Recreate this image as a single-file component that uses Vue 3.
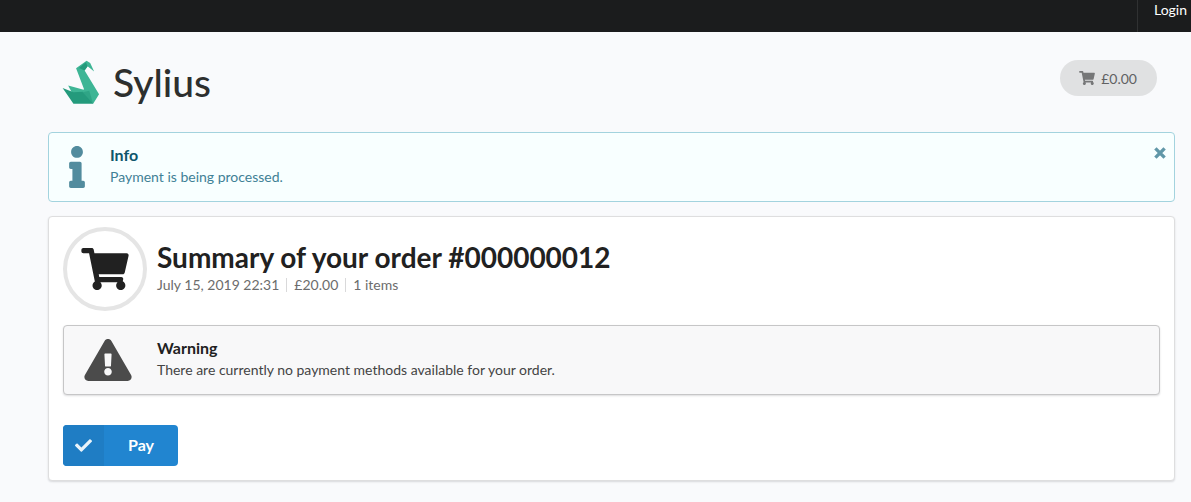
<script setup>
import { ref } from "vue";

const showInfo = ref(true);

const order = {
  number: "000000012",
  details: ["July 15, 2019 22:31", "£20.00", "1 items"],
};

const cartPath =
  "M528.12 301.319l47.273-208C578.806 78.301 567.391 64 551.99 64H159.208l-9.166-44.81C147.758 8.021 137.93 0 126.529 0H24C10.745 0 0 10.745 0 24v16c0 13.255 10.745 24 24 24h69.883l70.248 343.435C147.325 417.1 136 435.222 136 456c0 30.928 25.072 56 56 56s56-25.072 56-56c0-15.674-6.447-29.835-16.824-40h209.647C430.447 426.165 424 440.326 424 456c0 30.928 25.072 56 56 56s56-25.072 56-56c0-22.172-12.888-41.332-31.579-50.405l5.517-24.276c3.413-15.018-8.002-29.319-23.403-29.319H218.117l-6.545-32h293.145c11.206 0 20.92-7.754 23.403-18.681z";
</script>

<template>
  <nav class="topbar">
    <a href="#" class="login">Login</a>
  </nav>

  <div class="container">
    <header class="header">
      <a href="#" class="logo">
        <svg class="swan" viewBox="66 28 114 134" aria-hidden="true">
          <path fill="#3eb595" d="M84 106L134 119L144 130L96 129Z" />
          <path fill="#249a7c" d="M67 113L100 126L146 124L160 161H100Z" />
          <path fill="#3eb595" d="M108 53L140 30L151 37L163 63L143 47L134 60L178 132L160 161L142 132L128 126L132 116Z" />
          <path fill="#2fa586" d="M128 126L148 122L160 161Z" />
          <path fill="#249a7c" d="M117 52L138 35L143 47L134 60Z" />
        </svg>
        <span class="brand">Sylius</span>
      </a>
      <button type="button" class="cart">
        <svg class="cart-icon" viewBox="0 0 576 512" aria-hidden="true">
          <path fill="currentColor" :d="cartPath" />
        </svg>
        £0.00
      </button>
    </header>

    <div v-if="showInfo" class="message info">
      <svg class="info-icon" viewBox="0 0 192 512" aria-hidden="true">
        <path
          fill="currentColor"
          d="M20 424.229h20V279.771H20c-11.046 0-20-8.954-20-20V212c0-11.046 8.954-20 20-20h112c11.046 0 20 8.954 20 20v212.229h20c11.046 0 20 8.954 20 20V492c0 11.046-8.954 20-20 20H20c-11.046 0-20-8.954-20-20v-47.771c0-11.046 8.954-20 20-20zM96 0C56.235 0 24 32.235 24 72s32.235 72 72 72 72-32.235 72-72S135.764 0 96 0z"
        />
      </svg>
      <div class="content">
        <div class="title">Info</div>
        <p>Payment is being processed.</p>
      </div>
      <button type="button" class="close" aria-label="Close" @click="showInfo = false">
        <svg viewBox="0 0 12 12" aria-hidden="true">
          <path d="M2.6 2.6L9.4 9.4M9.4 2.6L2.6 9.4" stroke="currentColor" stroke-width="3.4" stroke-linecap="square" />
        </svg>
      </button>
    </div>

    <main class="segment">
      <div class="summary">
        <div class="circle">
          <svg viewBox="0 0 576 512" aria-hidden="true">
            <path fill="currentColor" :d="cartPath" />
          </svg>
        </div>
        <div class="content">
          <h1>Summary of your order #{{ order.number }}</h1>
          <ul class="details">
            <li v-for="detail in order.details" :key="detail">{{ detail }}</li>
          </ul>
        </div>
      </div>

      <div class="message warning">
        <svg class="warning-icon" viewBox="0 0 576 512" aria-hidden="true">
          <path
            fill="currentColor"
            d="M569.517 440.013C587.975 472.007 564.806 512 527.94 512H48.054c-36.937 0-59.999-40.055-41.577-71.987L246.423 23.985c18.467-32.009 64.72-31.951 83.154 0l239.94 416.028zM288 354c-25.405 0-46 20.595-46 46s20.595 46 46 46 46-20.595 46-46-20.595-46-46-46zm-43.673-165.346l7.418 136c.347 6.364 5.609 11.346 11.982 11.346h48.546c6.373 0 11.635-4.982 11.982-11.346l7.418-136c.375-6.874-5.098-12.654-11.982-12.654h-63.383c-6.884 0-12.356 5.78-11.981 12.654z"
          />
        </svg>
        <div class="content">
          <div class="title">Warning</div>
          <p>There are currently no payment methods available for your order.</p>
        </div>
      </div>

      <button type="button" class="pay">
        <span class="pay-icon">
          <svg viewBox="0 0 512 512" aria-hidden="true">
            <path
              fill="currentColor"
              d="M173.898 439.404l-166.4-166.4c-9.997-9.997-9.997-26.206 0-36.204l36.203-36.204c9.997-9.998 26.207-9.998 36.204 0L192 312.69 432.095 72.596c9.997-9.997 26.207-9.997 36.204 0l36.203 36.204c9.997 9.997 9.997 26.206 0 36.204l-294.4 294.401c-9.998 9.997-26.207 9.997-36.204-.001z"
            />
          </svg>
        </span>
        <span class="pay-label">Pay</span>
      </button>
    </main>
  </div>
</template>

<style>
body {
  margin: 0;
  background: #f9fafc;
  color: #212121;
  font-family: Lato, "Liberation Sans", sans-serif;
  font-size: 14px;
  line-height: 20px;
}
</style>

<style scoped>
* {
  box-sizing: border-box;
}

svg {
  display: block;
  flex-shrink: 0;
}

button {
  border: none;
  font-family: inherit;
  cursor: pointer;
}

.topbar {
  display: flex;
  justify-content: flex-end;
  height: 32px;
  background: #1b1c1d;
}

.login {
  padding: 0 4px 0 16px;
  border-left: 1px solid #303132;
  color: #fff;
  text-decoration: none;
}

.container {
  padding: 28px 16px 20px 48px;
}

.header {
  display: flex;
  justify-content: space-between;
  align-items: flex-start;
  height: 72px;
  padding: 0 18px 0 14px;
}

.logo {
  display: flex;
  gap: 13px;
  color: #2d2f2e;
  text-decoration: none;
}

.swan {
  width: 38px;
  height: 44px;
}

.brand {
  font-size: 39px;
  font-weight: 500;
  line-height: 44px;
}

.cart {
  display: flex;
  align-items: center;
  gap: 6px;
  height: 36px;
  padding: 0 20px 0 19px;
  border-radius: 18px;
  background: #e0e1e2;
  color: #606162;
  font-size: 14px;
}

.cart-icon {
  width: 16px;
  height: 14px;
  color: #767778;
}

.content {
  padding-bottom: 4px;
}

.message {
  display: flex;
  align-items: center;
  height: 70px;
  border: 1px solid;
  border-radius: 4px;
}

.message p {
  margin: 0;
}

.title {
  font-size: 16px;
  font-weight: 700;
  line-height: 24px;
}

.info {
  position: relative;
  gap: 25px;
  padding-left: 20px;
  border-color: #a3d3de;
  background: #f8ffff;
  color: #3f8196;
}

.info .title {
  color: #0e566c;
}

.info-icon {
  width: 16px;
  height: 42px;
  color: #528c9e;
}

.close {
  position: absolute;
  top: 14px;
  right: 8px;
  padding: 0;
  background: none;
  color: #6097a8;
}

.close svg {
  width: 12px;
  height: 12px;
}

.segment {
  margin-top: 14px;
  padding: 10px 14px 14px;
  border: 1px solid #dededf;
  border-radius: 4px;
  background: #fff;
  box-shadow: 0 1px 2px rgba(34, 36, 38, 0.15);
}

.summary {
  display: flex;
  align-items: center;
  gap: 10px;
}

.circle {
  display: flex;
  justify-content: center;
  align-items: center;
  width: 84px;
  height: 84px;
  border: 4px solid #e5e5e5;
  border-radius: 50%;
}

.circle svg {
  width: 48px;
  height: 42px;
}

h1 {
  margin: 0;
  font-size: 28px;
  font-weight: 700;
  line-height: 36px;
}

.details {
  display: flex;
  margin: 0;
  padding: 0;
  list-style: none;
  color: #6c6c6c;
  line-height: 20px;
}

.details li {
  display: flex;
  align-items: center;
}

.details li + li::before {
  content: "";
  height: 14px;
  margin: 0 7px;
  border-left: 1px solid #d9d9da;
}

.warning {
  gap: 25px;
  margin-top: 14px;
  padding-left: 20px;
  border-color: #c6c6c7;
  background: #f8f8f9;
  color: #444;
  box-shadow: 0 1px 2px rgba(34, 36, 38, 0.15);
}

.warning .title {
  color: #212121;
}

.warning-icon {
  width: 48px;
  height: 42px;
  color: #4b4b4b;
}

.pay {
  display: flex;
  height: 41px;
  margin-top: 30px;
  padding: 0;
  overflow: hidden;
  border-radius: 4px;
  background: #2185d0;
  color: #fff;
  font-size: 16px;
  font-weight: 700;
  line-height: 40px;
}

.pay-icon {
  display: flex;
  justify-content: center;
  align-items: center;
  width: 41px;
  height: 41px;
  background: #1f7dc4;
}

.pay-icon svg {
  width: 17px;
  height: 17px;
  color: #e9f3fa;
}

.pay-label {
  padding: 0 24px;
}
</style>
